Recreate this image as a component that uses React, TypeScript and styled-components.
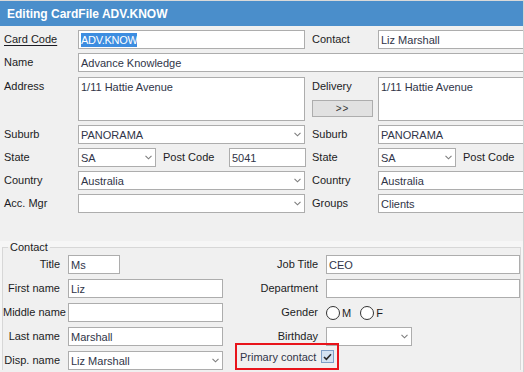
import styled, { createGlobalStyle } from "styled-components";

const GlobalStyle = createGlobalStyle`
  html, body {
    margin: 0;
    padding: 0;
    background: #f0f0f0;
    overflow: hidden;
  }
  body {
    font-family: "Liberation Sans", Arial, sans-serif;
    font-size: 11px;
    color: #1c1c24;
  }
`;

const Window = styled.div`
  width: 523px;
  height: 371px;
  border-top: 1px solid #d9d9d9;
  border-right: 1px solid #d2d2d2;
  overflow: hidden;
  background: #f0f0f0;
`;

const TitleBar = styled.div`
  height: 25px;
  display: flex;
  align-items: center;
  padding-left: 7px;
  background: #4a8ecb;
  color: #ffffff;
  font-size: 12px;
  font-weight: bold;
`;

const Upper = styled.div`
  display: grid;
  grid-template-columns: 74px 227px 7px 66px 160px;
  grid-template-rows: 19px 20px 44px 19px 19px 19px 19px;
  row-gap: 4px;
  padding: 4px 0 0 4px;
`;

const Label = styled.div<{ $underline?: boolean }>`
  height: 19px;
  line-height: 19px;
  white-space: nowrap;
  text-decoration: ${(p) => (p.$underline ? "underline" : "none")};
  text-underline-offset: 2px;
`;

const Input = styled.div<{ $w?: number; $h?: number }>`
  box-sizing: border-box;
  width: ${(p) => (p.$w ? `${p.$w}px` : "100%")};
  height: ${(p) => (p.$h ? `${p.$h}px` : "19px")};
  display: flex;
  align-items: ${(p) => (p.$h ? "flex-start" : "center")};
  padding: ${(p) => (p.$h ? "3px 2px" : "0 2px")};
  background: #ffffff;
  border: 1px solid #adadad;
  color: #303548;
  white-space: nowrap;
  overflow: hidden;
`;

const Selected = styled.span`
  background: #3d8de0;
  color: #ffffff;
  padding: 1px 0;
  letter-spacing: -0.3px;
`;

const SelectBox = styled(Input)`
  justify-content: space-between;
  padding-right: 3px;
`;

const Chevron = () => (
  <svg width="7" height="5" viewBox="0 0 7 5">
    <polyline points="0.5,0.8 3.5,3.8 6.5,0.8" fill="none" stroke="#7d7d7d" strokeWidth="1.1" />
  </svg>
);

const Select = ({ value, w }: { value?: string; w?: number }) => (
  <SelectBox $w={w}>
    <span>{value}</span>
    <Chevron />
  </SelectBox>
);

const StateCell = styled.div`
  display: grid;
  grid-template-columns: 78px 7px 66px 77px;
  align-items: center;
`;

const DeliveryCell = styled.div`
  display: flex;
  flex-direction: column;
  gap: 4px;
`;

const SmallButton = styled.div`
  box-sizing: border-box;
  width: 61px;
  height: 17px;
  display: flex;
  align-items: center;
  justify-content: center;
  background: #e1e1e1;
  border: 1px solid #adadad;
  color: #333;
  font-size: 10px;
  letter-spacing: 1px;
`;

const Lower = styled.div`
  margin-top: 28px;
  background: #f6f6f6;
`;

const GroupBox = styled.fieldset`
  margin: 0 2px;
  padding: 1px 0 0 0;
  border: 1px solid #d7d7d7;
  border-bottom: none;
  background: #f0f0f0;
  min-width: 0;
`;

const Legend = styled.legend`
  margin-left: 5px;
  padding: 0 2px;
  line-height: 13px;
  font-size: 11px;
`;

const ContactGrid = styled.div`
  display: grid;
  grid-template-columns: 57px 8px 155px 95px 8px 194px;
  grid-auto-rows: 19px;
  row-gap: 5px;
`;

const RightLabel = styled(Label)`
  text-align: right;
`;

const RadioGroup = styled.div`
  display: flex;
  align-items: center;
  height: 19px;
`;

const RadioCircle = styled.span`
  box-sizing: border-box;
  width: 14px;
  height: 14px;
  border-radius: 50%;
  border: 1px solid #333;
  background: #ffffff;
  margin-right: 2px;
`;

const RadioText = styled.span`
  margin-right: 9px;
`;

const PrimaryCell = styled.div`
  grid-column: 4 / 7;
  align-self: end;
  padding-left: 12px;
`;

const RedBox = styled.div`
  box-sizing: border-box;
  width: 104px;
  height: 27px;
  display: flex;
  align-items: center;
  gap: 5px;
  padding-left: 3px;
  border: 2px solid #e8141b;
  color: #303548;
`;

const CheckBox = styled.span`
  box-sizing: border-box;
  width: 13px;
  height: 13px;
  display: flex;
  align-items: center;
  justify-content: center;
  background: #d4e3f3;
  border: 1px solid #7f9fc6;
`;

const Span = styled.div<{ $col: string }>`
  grid-column: ${(p) => p.$col};
`;

export default function App() {
  return (
    <>
      <GlobalStyle />
      <Window>
        <TitleBar>Editing CardFile ADV.KNOW</TitleBar>
        <Upper>
          <Label $underline>Card Code</Label>
          <Input>
            <Selected>ADV.KNOW</Selected>
          </Input>
          <div />
          <Label>Contact</Label>
          <Input>Liz Marshall</Input>

          <Label>Name</Label>
          <Span $col="2 / 6">
            <Input>Advance Knowledge</Input>
          </Span>

          <Label>Address</Label>
          <Input $h={44}>1/11 Hattie Avenue</Input>
          <div />
          <DeliveryCell>
            <Label>Delivery</Label>
            <SmallButton>&gt;&gt;</SmallButton>
          </DeliveryCell>
          <Input $h={44}>1/11 Hattie Avenue</Input>

          <Label>Suburb</Label>
          <Select value="PANORAMA" />
          <div />
          <Label>Suburb</Label>
          <Input>PANORAMA</Input>

          <Label>State</Label>
          <StateCell>
            <Select value="SA" />
            <div />
            <Label>Post Code</Label>
            <Input>5041</Input>
          </StateCell>
          <div />
          <Label>State</Label>
          <StateCell>
            <Select value="SA" />
            <div />
            <Label>Post Code</Label>
            <Input />
          </StateCell>

          <Label>Country</Label>
          <Select value="Australia" />
          <div />
          <Label>Country</Label>
          <Input>Australia</Input>

          <Label>Acc. Mgr</Label>
          <Select />
          <div />
          <Label>Groups</Label>
          <Input>Clients</Input>
        </Upper>

        <Lower>
          <GroupBox>
            <Legend>Contact</Legend>
            <ContactGrid>
              <RightLabel>Title</RightLabel>
              <div />
              <Input $w={52}>Ms</Input>
              <RightLabel>Job Title</RightLabel>
              <div />
              <Input>CEO</Input>

              <RightLabel>First name</RightLabel>
              <div />
              <Input>Liz</Input>
              <RightLabel>Department</RightLabel>
              <div />
              <Input />

              <RightLabel>Middle name</RightLabel>
              <div />
              <Input />
              <RightLabel>Gender</RightLabel>
              <div />
              <RadioGroup>
                <RadioCircle />
                <RadioText>M</RadioText>
                <RadioCircle />
                <RadioText>F</RadioText>
              </RadioGroup>

              <RightLabel>Last name</RightLabel>
              <div />
              <Input>Marshall</Input>
              <RightLabel>Birthday</RightLabel>
              <div />
              <Select w={86} />

              <RightLabel>Disp. name</RightLabel>
              <div />
              <Select value="Liz Marshall" />
              <PrimaryCell>
                <RedBox>
                  <span>Primary contact</span>
                  <CheckBox>
                    <svg width="9" height="8" viewBox="0 0 9 8">
                      <polyline points="1,4 3.4,6.4 8,1.2" fill="none" stroke="#2b2b2b" strokeWidth="1.6" />
                    </svg>
                  </CheckBox>
                </RedBox>
              </PrimaryCell>
            </ContactGrid>
          </GroupBox>
        </Lower>
      </Window>
    </>
  );
}
